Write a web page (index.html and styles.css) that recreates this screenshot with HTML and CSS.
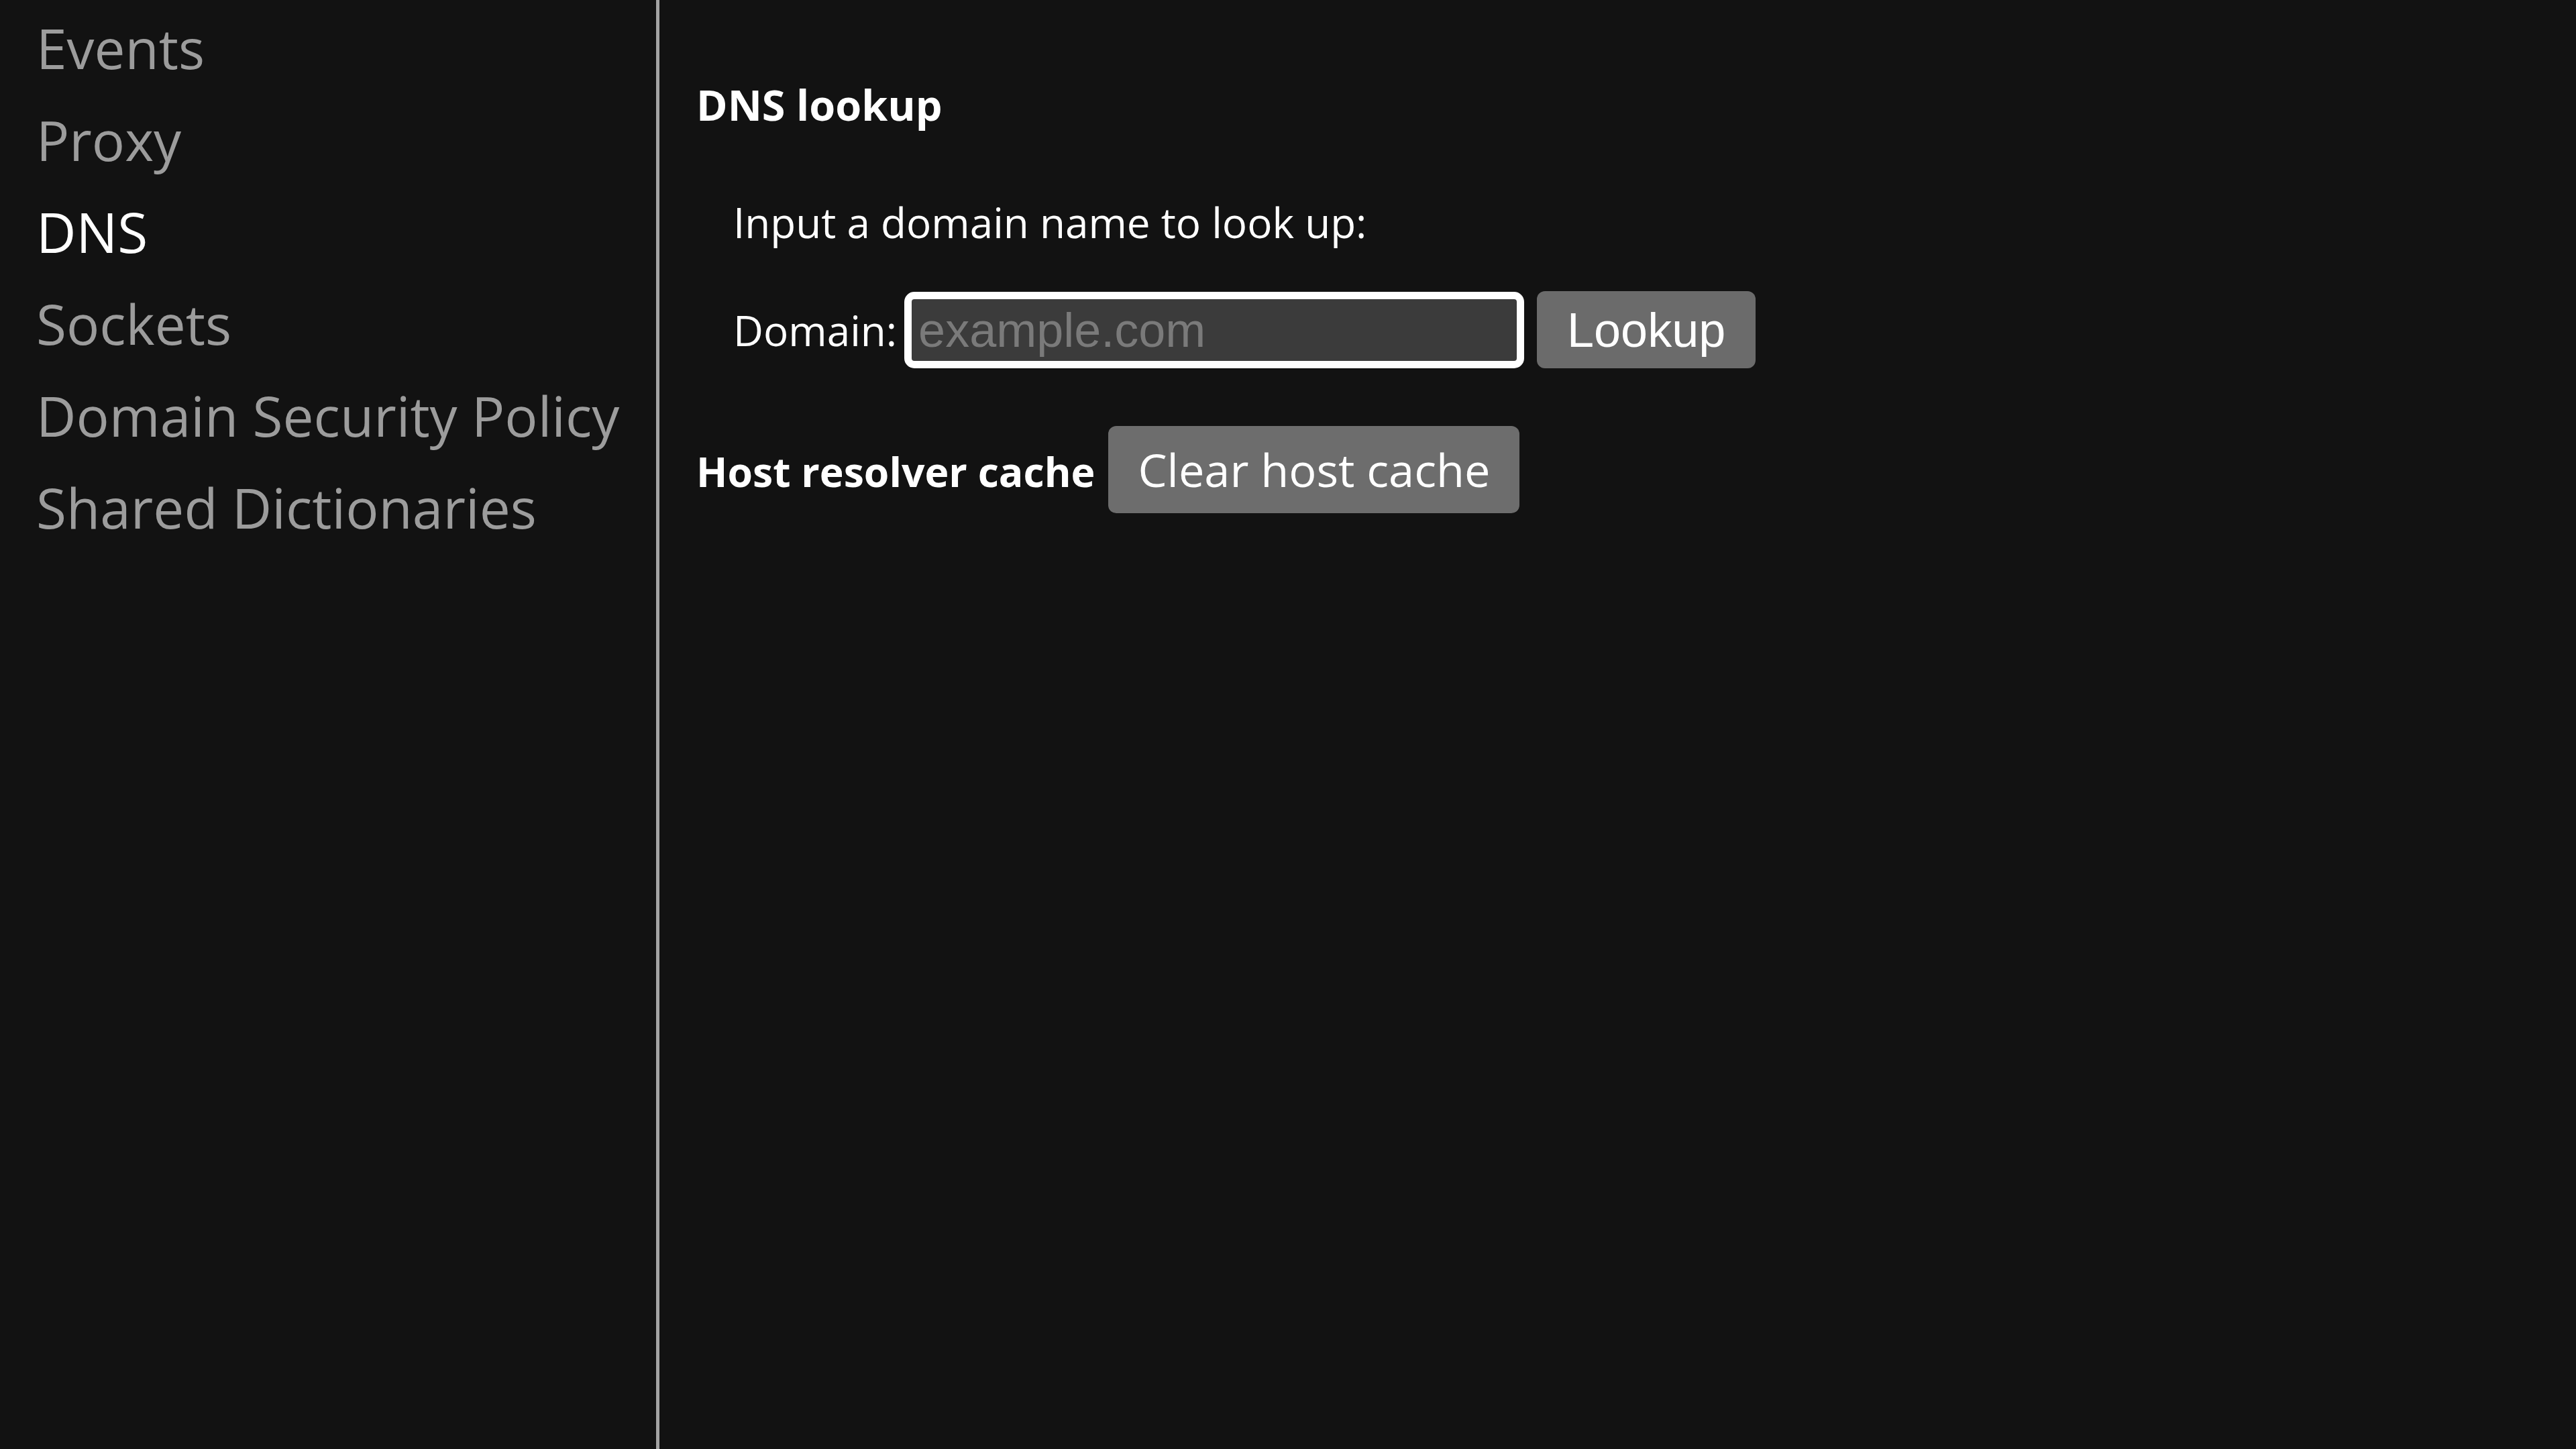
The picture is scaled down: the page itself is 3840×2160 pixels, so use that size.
FILE: index.html
```html
<!DOCTYPE html>
<html lang="en">
<head>
<meta charset="utf-8">
<title>net-internals DNS</title>
<link rel="stylesheet" href="styles.css">
</head>
<body>
<div class="app">
  <nav class="sidebar">
    <a class="nav-item">Events</a>
    <a class="nav-item">Proxy</a>
    <a class="nav-item selected">DNS</a>
    <a class="nav-item">Sockets</a>
    <a class="nav-item">Domain Security Policy</a>
    <a class="nav-item">Shared Dictionaries</a>
  </nav>
  <main class="content">
    <h2 class="section-title">DNS lookup</h2>
    <div class="indent">
      <p class="prompt">Input a domain name to look up:</p>
      <form class="lookup-row" onsubmit="return false">
        <label class="label" for="domain">Domain:</label>
        <input id="domain" class="domain-input" type="text" placeholder="example.com">
        <input class="lookup-btn" type="submit" value="Lookup">
      </form>
    </div>
    <div class="cache-row">
      <h2 class="section-title compact">Host resolver cache</h2>
      <button class="clear-btn" type="button">Clear host cache</button>
    </div>
  </main>
</div>
</body>
</html>
```

FILE: styles.css
```css
html, body {
  margin: 0;
  padding: 0;
  background: #121212;
  height: 100%;
}

body {
  font-family: "Open Sans", "Noto Sans", sans-serif;
  color: #ffffff;
}

.app {
  display: flex;
  height: 2160px;
}

.sidebar {
  width: 978px;
  flex: 0 0 978px;
  border-right: 5px solid #a3a3a3;
  padding-top: 3px;
  display: flex;
  flex-direction: column;
}

.nav-item {
  display: block;
  padding-left: 54px;
  font-size: 82px;
  line-height: 137px;
  color: #9c9c9c;
  text-decoration: none;
  white-space: nowrap;
}

.nav-item.selected {
  color: #ffffff;
}

.content {
  flex: 1;
  padding-left: 55px;
  padding-top: 116px;
}

.section-title {
  margin: 0;
  font-size: 63px;
  font-weight: 700;
  line-height: 80px;
  color: #ffffff;
}

.section-title.compact {
  font-size: 60.7px;
}

.indent {
  padding-left: 55px;
  margin-top: 95px;
}

.prompt {
  margin: 0;
  font-size: 62px;
  line-height: 80px;
}

.lookup-row {
  display: flex;
  align-items: center;
  margin: 63px 0 0 0;
}

.label {
  font-size: 62px;
  line-height: 80px;
  margin-right: 11px;
}

.domain-input {
  box-sizing: border-box;
  width: 924px;
  height: 114px;
  border: 11px solid #ffffff;
  border-radius: 15px;
  background: #3b3b3b;
  padding: 0 10px;
  font-family: "Liberation Sans", Arial, sans-serif;
  font-size: 72px;
  color: #ffffff;
  outline: none;
}

.domain-input::placeholder {
  color: #7a7a7a;
}

.lookup-btn {
  box-sizing: border-box;
  width: 326px;
  height: 115px;
  margin-left: 19px;
  border: none;
  border-radius: 12px;
  background: #6b6b6b;
  color: #ffffff;
  font-family: "Liberation Sans", Arial, sans-serif;
  font-size: 72px;
  padding: 0;
}

.cache-row {
  display: flex;
  align-items: baseline;
  gap: 20px;
  margin-top: 86px;
}

.clear-btn {
  box-sizing: border-box;
  height: 130px;
  border: none;
  border-radius: 12px;
  background: #6d6d6d;
  color: #ffffff;
  font-family: "Open Sans", "Noto Sans", sans-serif;
  font-size: 68.5px;
  line-height: 130px;
  padding: 0 44px;
}
```
